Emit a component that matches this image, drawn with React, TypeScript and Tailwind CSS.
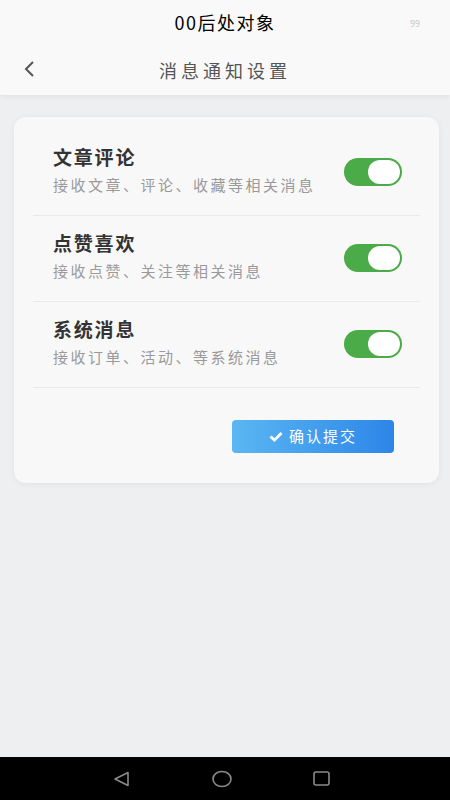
import { useState } from "react";

const font = { fontFamily: '"Noto Sans CJK SC", "Noto Sans", sans-serif' };

type Item = { title: string; desc: string };

const items: Item[] = [
  { title: "文章评论", desc: "接收文章、评论、收藏等相关消息" },
  { title: "点赞喜欢", desc: "接收点赞、关注等相关消息" },
  { title: "系统消息", desc: "接收订单、活动、等系统消息" },
];

function Toggle({ on, onClick }: { on: boolean; onClick: () => void }) {
  return (
    <button
      onClick={onClick}
      className={`mt-[3px] flex h-[28px] w-[58px] items-center rounded-full px-[2px] ${
        on ? "justify-end bg-[#4aab48]" : "justify-start bg-[#d5d5d5]"
      }`}
    >
      <span className="h-[24px] w-[32px] rounded-full bg-white" />
    </button>
  );
}

export default function App() {
  const [state, setState] = useState([true, true, true]);

  return (
    <div className="flex h-[800px] w-[450px] flex-col bg-[#eeeff1]" style={font}>
      {/* status bar */}
      <div className="relative flex h-[45px] items-center justify-center bg-[#f9f9f9]">
        <span className="text-[18px] tracking-[1.5px] text-black">00后处对象</span>
        <span className="absolute right-[30px] top-[17px] text-[9px] text-[#c8c8c8]">99</span>
      </div>

      {/* nav */}
      <div className="relative flex h-[50px] items-center justify-center bg-[#f9f9f9] shadow-[0_2px_4px_rgba(0,0,0,0.05)]">
        <svg
          className="absolute left-[22px] top-[14px]"
          width="14"
          height="20"
          viewBox="0 0 14 20"
          fill="none"
          stroke="#555"
          strokeWidth="2"
        >
          <path d="M11 3 L4 10 L11 17" />
        </svg>
        <span className="text-[18px] tracking-[4px] text-[#555]">消息通知设置</span>
      </div>

      {/* card */}
      <div className="ml-[14px] mr-[11px] mt-[22px] rounded-[12px] bg-[#f8f8f8] px-[19px] pb-[30px] pt-[13px] shadow-[0_1px_6px_rgba(0,0,0,0.06)]">
        {items.map((it, i) => (
          <div
            key={it.title}
            className="flex items-center justify-between border-b border-[#e9e9e9] pb-[20px] pl-[20px] pr-[18px] pt-[15px]"
          >
            <div className="flex flex-col">
              <span className="text-[19px] font-bold leading-[24px] tracking-[1.8px] text-[#333]">
                {it.title}
              </span>
              <span className="mt-[6px] text-[15px] leading-[20px] tracking-[2.5px] text-[#9a9a9a]">
                {it.desc}
              </span>
            </div>
            <Toggle
              on={state[i]}
              onClick={() => setState(state.map((v, j) => (j === i ? !v : v)))}
            />
          </div>
        ))}

        <div className="mt-[32px] flex justify-end pr-[26px]">
          <button className="flex h-[33px] w-[162px] items-center justify-center gap-[6px] rounded-[4px] bg-gradient-to-r from-[#5bb6f3] to-[#2c86e8] text-[15px] tracking-[2px] text-white">
            <svg width="14" height="12" viewBox="0 0 14 12" fill="white">
              <path d="M0.5 6.5 L2.5 4.5 L5.5 7.3 L11.5 1 L13.5 3 L5.5 11 Z" />
            </svg>
            确认提交
          </button>
        </div>
      </div>

      <div className="flex-1" />

      {/* android nav */}
      <div className="flex h-[43px] items-center bg-black">
        <svg className="absolute left-[113px]" width="18" height="18" viewBox="0 0 18 18" fill="none" stroke="#8a8a8a" strokeWidth="1.6">
          <path d="M2 9 L15 2.5 L15 15.5 Z" strokeLinejoin="round" />
        </svg>
        <svg className="absolute left-[211px]" width="22" height="22" viewBox="0 0 22 22" fill="none" stroke="#8a8a8a" strokeWidth="1.6">
          <ellipse cx="11" cy="11" rx="9" ry="7.5" />
        </svg>
        <svg className="absolute left-[312px]" width="20" height="20" viewBox="0 0 20 20" fill="none" stroke="#8a8a8a" strokeWidth="1.6">
          <rect x="2" y="3" width="15" height="13" rx="2" />
        </svg>
      </div>
    </div>
  );
}
